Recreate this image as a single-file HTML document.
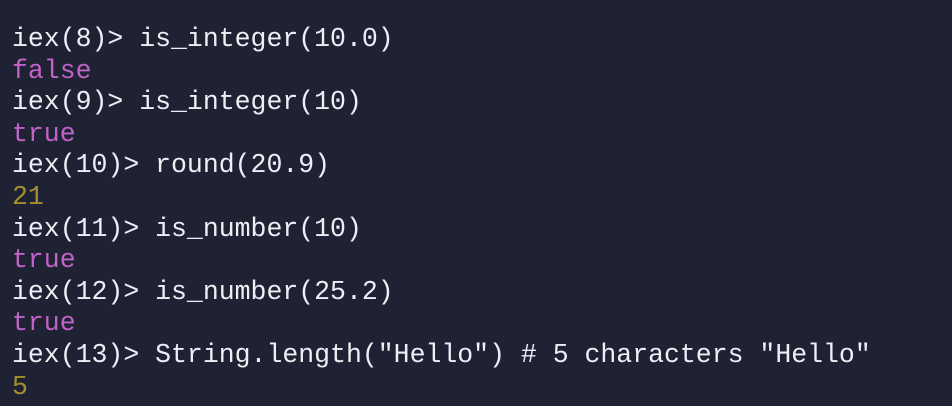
<!DOCTYPE html>
<html><head><style>
html,body{margin:0;padding:0;background:#1e2232;width:952px;height:406px;overflow:hidden}
pre{margin:0;position:absolute;left:12px;top:24px;font-family:"Liberation Mono",monospace;font-size:26.5px;line-height:31.6px;color:#eceff4;}
.p{color:#c262c9}.y{color:#a48f30}
</style></head><body>
<pre>iex(8)&gt; is_integer(10.0)
<span class="p">false</span>
iex(9)&gt; is_integer(10)
<span class="p">true</span>
iex(10)&gt; round(20.9)
<span class="y">21</span>
iex(11)&gt; is_number(10)
<span class="p">true</span>
iex(12)&gt; is_number(25.2)
<span class="p">true</span>
iex(13)&gt; String.length("Hello") # 5 characters "Hello"
<span class="y">5</span></pre>
</body></html>
